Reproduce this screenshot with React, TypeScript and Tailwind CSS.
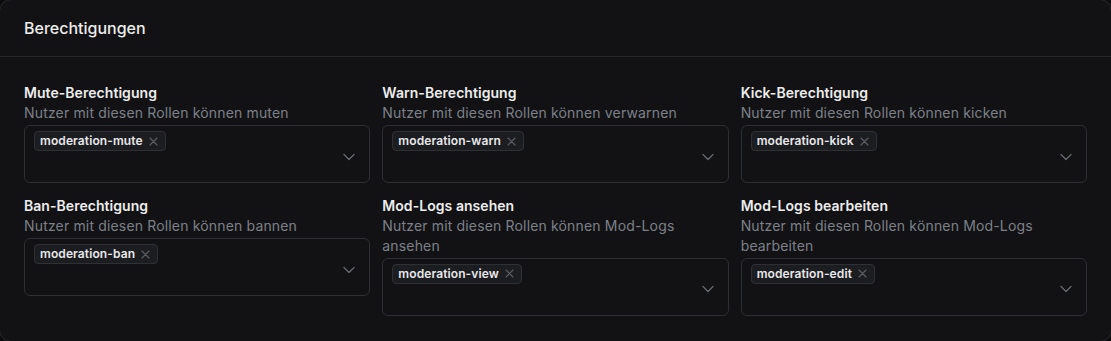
import React from "react";

const items = [
  { label: "Mute-Berechtigung", desc: "Nutzer mit diesen Rollen können muten", chip: "moderation-mute" },
  { label: "Warn-Berechtigung", desc: "Nutzer mit diesen Rollen können verwarnen", chip: "moderation-warn" },
  { label: "Kick-Berechtigung", desc: "Nutzer mit diesen Rollen können kicken", chip: "moderation-kick" },
  { label: "Ban-Berechtigung", desc: "Nutzer mit diesen Rollen können bannen", chip: "moderation-ban" },
  { label: "Mod-Logs ansehen", desc: "Nutzer mit diesen Rollen können Mod-Logs ansehen", chip: "moderation-view" },
  { label: "Mod-Logs bearbeiten", desc: "Nutzer mit diesen Rollen können Mod-Logs bearbeiten", chip: "moderation-edit" },
];

function Field({ label, desc, chip }: { label: string; desc: string; chip: string }) {
  return (
    <div className="flex flex-col">
      <div className="text-[14px] leading-[20px] font-semibold tracking-[0.05px] text-[#ededed]">{label}</div>
      <div className="text-[14px] leading-[19.5px] tracking-[0.16px] text-[#7d8089]">{desc}</div>
      <div className="mt-[2.5px] h-[58px] rounded-md border border-[#2e2f34] flex items-start justify-between pl-[9px] pr-[13px] pt-[5px]">
        <div className="flex items-center h-[20px] rounded-[4px] border border-[#2f3036] bg-[#1c1d21] pl-[5px] pr-[7px] gap-[6px]">
          <span className="text-[12px] font-semibold tracking-[0.1px] text-[#e8e8ea] leading-none">{chip}</span>
          <svg width="9" height="9" viewBox="0 0 9 9" fill="none" stroke="#5c5f68" strokeWidth="1.1" strokeLinecap="round">
            <path d="M1 1 L8 8 M8 1 L1 8" />
          </svg>
        </div>
        <svg className="self-center" width="14" height="14" viewBox="0 0 14 14" fill="none" stroke="#666972" strokeWidth="1.3" strokeLinecap="round" strokeLinejoin="round">
          <path d="M2 4.5 L7 9.5 L12 4.5" />
        </svg>
      </div>
    </div>
  );
}

export default function App() {
  return (
    <div className="w-[1111px] h-[341px] bg-[#0b0b0c] overflow-hidden" style={{ fontFamily: "Inter, 'Noto Sans', sans-serif" }}>
      <div className="-m-px w-[1113px] h-[343px] rounded-xl border border-[#2a2a2e] bg-[#121214]">
        <div className="h-[57px] flex items-center px-[24px] border-b border-[#26272b]">
          <span className="text-[16px] font-medium text-[#ececec]">Berechtigungen</span>
        </div>
        <div className="px-[24px] pt-[26px] grid grid-cols-3 gap-x-3 gap-y-[13px] items-start">
          {items.map((it) => (
            <Field key={it.label} {...it} />
          ))}
        </div>
      </div>
    </div>
  );
}
